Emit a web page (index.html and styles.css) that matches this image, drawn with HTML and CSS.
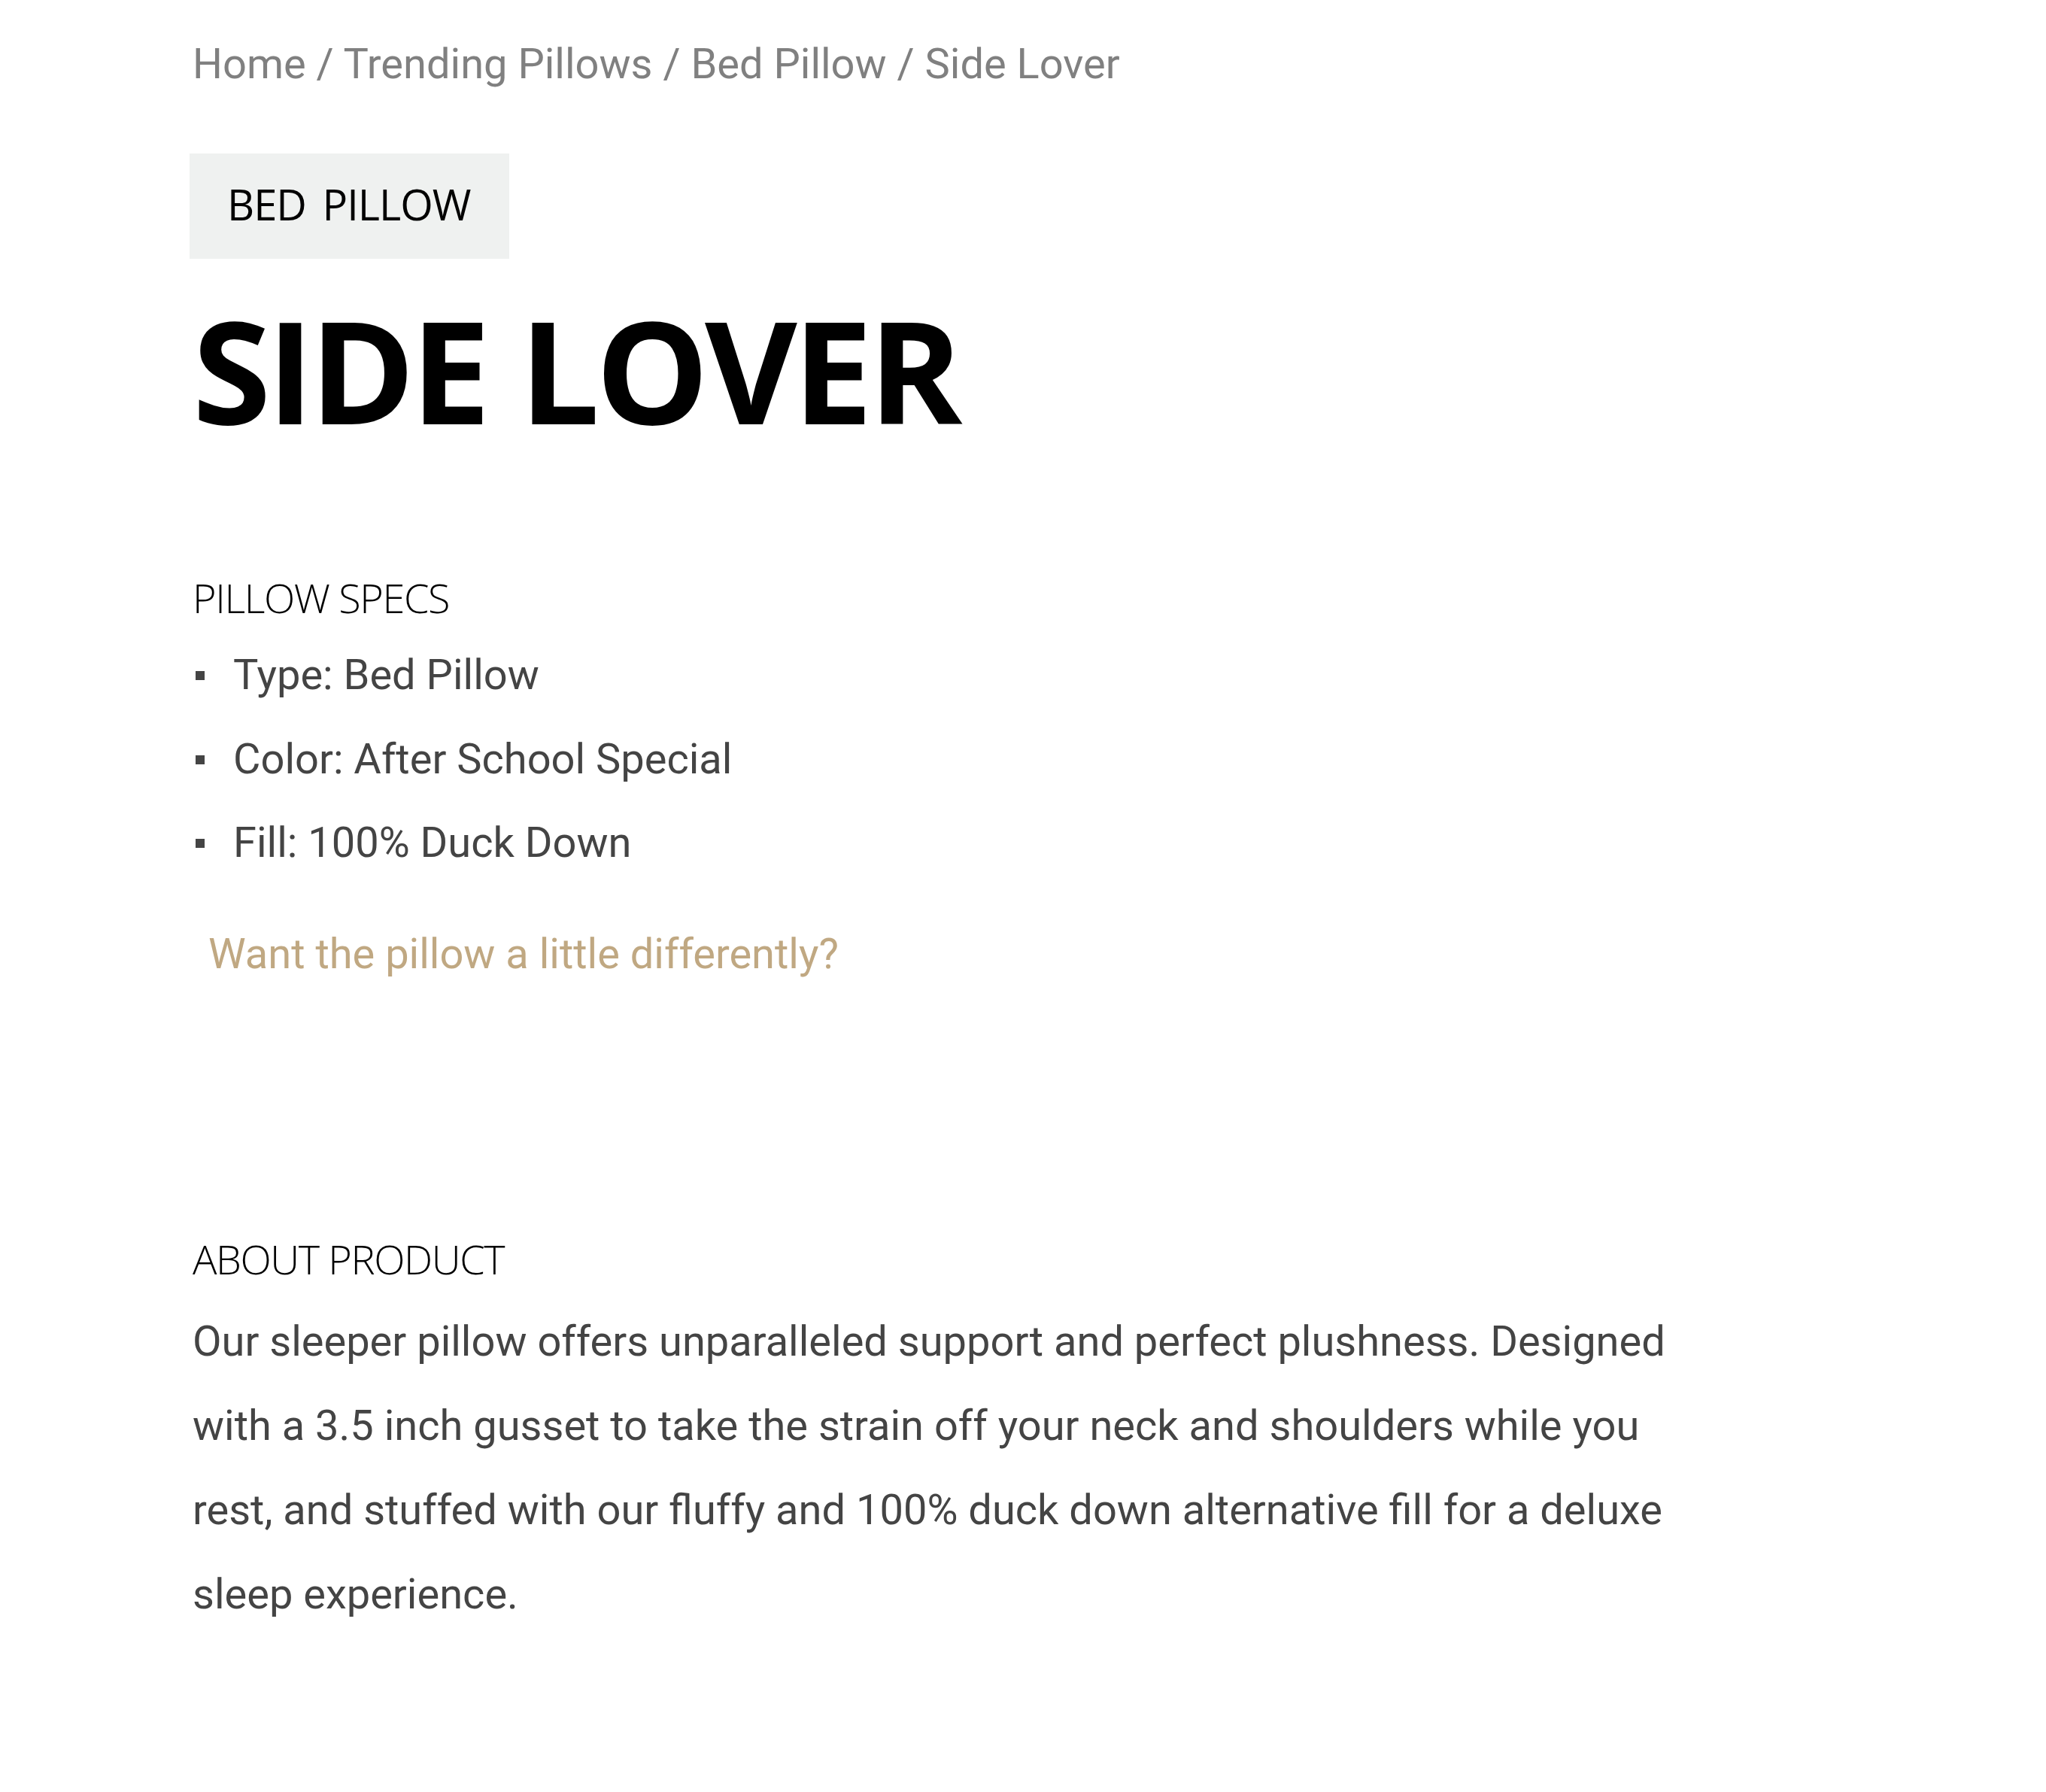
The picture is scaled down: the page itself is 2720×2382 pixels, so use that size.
FILE: index.html
```html
<!DOCTYPE html>
<html lang="en">
<head>
<meta charset="utf-8">
<title>Side Lover</title>
<link rel="stylesheet" href="styles.css">
</head>
<body>
<main class="product">
  <nav class="breadcrumb">Home / Trending Pillows / Bed Pillow / Side Lover</nav>
  <div class="badge">BED PILLOW</div>
  <h1 class="title">SIDE LOVER</h1>
  <section class="specs">
    <h2 class="section-heading">PILLOW SPECS</h2>
    <ul class="spec-list">
      <li>Type: Bed Pillow</li>
      <li>Color: After School Special</li>
      <li>Fill: 100% Duck Down</li>
    </ul>
    <a class="custom-link" href="#">Want the pillow a little differently?</a>
  </section>
  <section class="about">
    <h2 class="section-heading">ABOUT PRODUCT</h2>
    <p class="about-text">Our sleeper pillow offers unparalleled support and perfect plushness. Designed with a 3.5 inch gusset to take the strain off your neck and shoulders while you rest, and stuffed with our fluffy and 100% duck down alternative fill for a deluxe sleep experience.</p>
  </section>
</main>
</body>
</html>
```
FILE: styles.css
```css
html, body {
  margin: 0;
  padding: 0;
  background: #ffffff;
}

body {
  font-family: Roboto, "Liberation Sans", sans-serif;
  color: #444444;
}

.product {
  display: flex;
  flex-direction: column;
  align-items: flex-start;
  padding: 43px 0 0 256px;
  min-height: 2339px;
}

.breadcrumb {
  font-size: 56px;
  line-height: 84px;
  color: #808080;
}

.badge {
  margin: 77px 0 0 -4px;
  height: 140px;
  box-sizing: border-box;
  padding: 0 51px 7px 50px;
  display: flex;
  align-items: center;
  background: #eff1f0;
  color: #000000;
  font-family: "Open Sans", "DejaVu Sans", sans-serif;
  font-weight: 500;
  font-size: 56px;
  letter-spacing: -1px;
  word-spacing: 8px;
}

.title {
  margin: 52px 0 0;
  font-family: "Open Sans", "DejaVu Sans", sans-serif;
  font-weight: 700;
  font-size: 189px;
  line-height: 189px;
  letter-spacing: -5.4px;
  color: #000000;
}

.specs {
  margin-top: 177px;
  display: flex;
  flex-direction: column;
  align-items: flex-start;
}

.section-heading {
  margin: 0;
  font-family: "Open Sans", "DejaVu Sans", sans-serif;
  font-weight: 300;
  font-size: 54px;
  line-height: 65px;
  letter-spacing: -1.4px;
  color: #000000;
}

.spec-list {
  list-style: none;
  margin: 15px 0 0;
  padding: 0 0 0 4px;
  font-size: 56px;
  line-height: 111.5px;
}

.spec-list li::before {
  content: "";
  display: inline-block;
  width: 12px;
  height: 12px;
  margin-right: 38px;
  background: #444444;
  vertical-align: 12px;
}

.custom-link {
  margin: 35px 0 0 21px;
  font-size: 56px;
  line-height: 112px;
  color: #c0a882;
  text-decoration: none;
}

.about {
  margin-top: 317px;
}

.about-text {
  margin: 21px 0 0;
  width: 2010px;
  font-size: 56px;
  line-height: 112px;
}
```
